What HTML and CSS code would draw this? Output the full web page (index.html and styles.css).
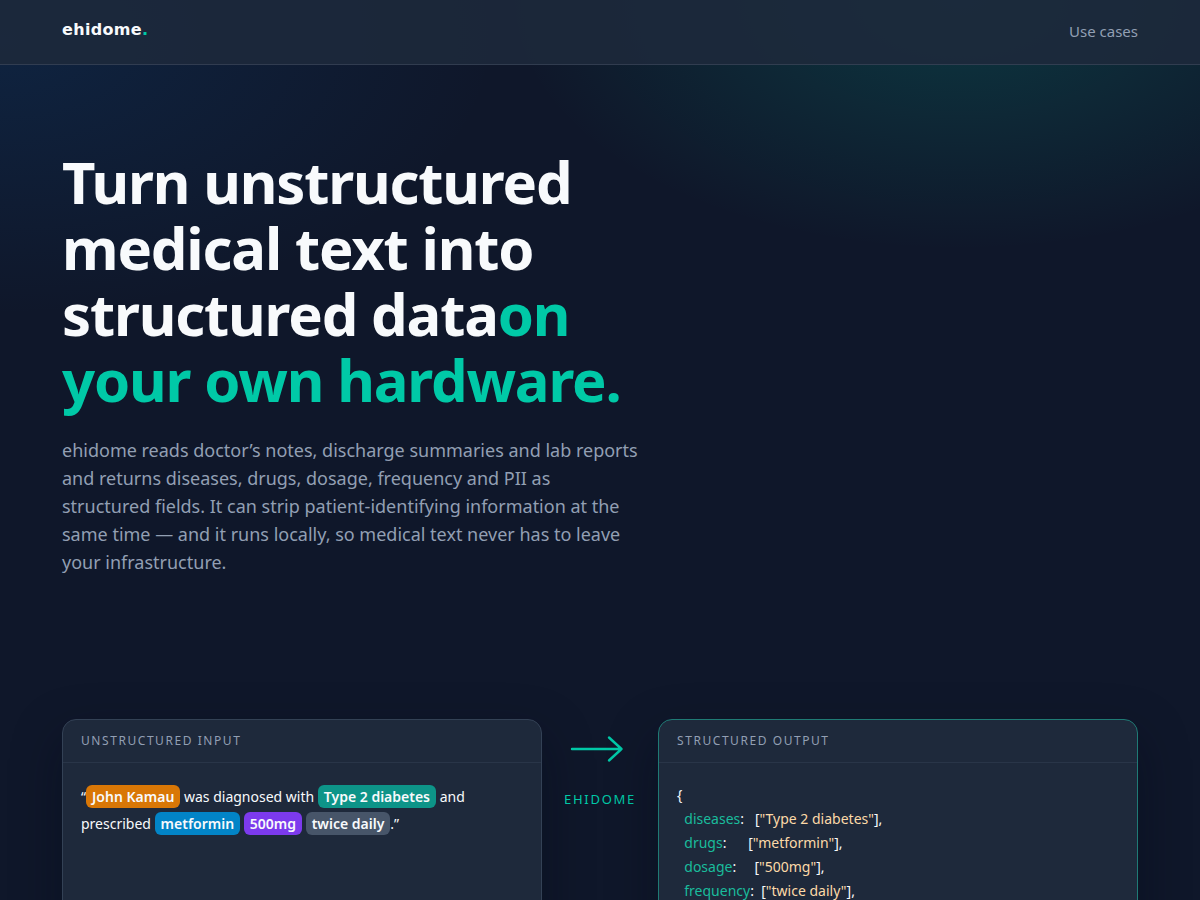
FILE: index.html
```html
<!DOCTYPE html>
<html lang="en">
<head>
	<meta charset="utf-8">
	<meta name="viewport" content="width=device-width, initial-scale=1.0">
	<title>ehidome</title>
	<link rel="stylesheet" href="styles.css">
</head>

<body>
	<header class="nav">
		<div class="container nav-inner">
			<a class="logo" href="#">ehidome<span class="dot">.</span></a>
			<nav>
				<a class="nav-link" href="#use-cases">Use cases</a>
			</nav>
		</div>
	</header>

	<main class="container">
		<section class="hero">
			<h1>Turn unstructured medical text into structured data<span class="accent">on your own hardware.</span></h1>
			<p class="lead">ehidome reads doctor’s notes, discharge summaries and lab reports and returns diseases, drugs, dosage, frequency and PII as structured fields. It can strip patient-identifying information at the same time — and it runs locally, so medical text never has to leave your infrastructure.</p>
		</section>

		<section class="demo" id="use-cases">
			<div class="card">
				<h2 class="card-head">Unstructured input</h2>
				<p class="card-body note">“<mark class="tag name">John Kamau</mark> was diagnosed with <mark class="tag disease">Type 2 diabetes</mark> and prescribed <mark class="tag drug">metformin</mark> <mark class="tag dose">500mg</mark> <mark class="tag freq">twice daily</mark>.”</p>
			</div>

			<div class="flow">
				<svg class="arrow" width="60" height="60" viewBox="0 0 60 60" fill="none" stroke="currentColor" stroke-width="2.4" stroke-linecap="round" stroke-linejoin="round" aria-hidden="true">
					<path d="M2 30h49.500M39 18.500l12.500 11.500l-12.500 11.500"/>
				</svg>
				<span class="flow-label">ehidome</span>
			</div>

			<div class="card output">
				<h2 class="card-head">Structured output</h2>
<pre class="card-body json">{
  <span class="key">diseases</span>:   [<span class="str">"Type 2 diabetes"</span>],
  <span class="key">drugs</span>:      [<span class="str">"metformin"</span>],
  <span class="key">dosage</span>:     [<span class="str">"500mg"</span>],
  <span class="key">frequency</span>:  [<span class="str">"twice daily"</span>],
  <span class="key">pii</span>:        [<span class="str">"John Kamau"</span>]
}</pre>
			</div>
		</section>
	</main>
</body>
</html>
```
FILE: styles.css
```css
* {
	box-sizing: border-box;
}
body {
	margin: 0;
	font-family: "Noto Sans", sans-serif;
	color: #f8fafc;
	background-color: #0f172a;
	background-image:
		radial-gradient(900px 500px at 80% 0, rgba(0, 201, 167, 0.18), transparent 50%),
		radial-gradient(900px 500px at 0 40px, rgba(14, 100, 180, 0.16), transparent 55%);
	background-repeat: no-repeat;
}
a {
	text-decoration: none;
}
.container {
	max-width: 1120px;
	margin: 0 auto;
	padding: 0 22px;
}

/* top bar */
.nav {
	background: rgba(30, 41, 59, 0.88);
	border-bottom: 1px solid rgba(148, 163, 184, 0.18);
}
.nav-inner {
	display: flex;
	align-items: center;
	justify-content: space-between;
	height: 64px;
	padding-bottom: 2px;
}
.logo {
	padding-bottom: 2px;
	font: 700 16px/24px "DejaVu Sans", sans-serif;
	letter-spacing: 0.02em;
	color: #f8fafc;
}
.dot, .accent {
	color: #00c9a7;
}
.nav-link {
	font-size: 15px;
	color: #929fb3;
}

/* hero */
.hero {
	padding: 84px 0 143px;
}
h1 {
	max-width: 600px;
	margin: 0 0 23px;
	font-size: 58px;
	line-height: 66px;
	font-weight: 700;
	letter-spacing: -0.02em;
}
.lead {
	max-width: 577px;
	margin: 0;
	font-size: 18px;
	line-height: 28px;
	color: #929fb3;
}

/* demo */
.demo {
	display: grid;
	grid-template-columns: 1fr 72px 1fr;
	gap: 22px;
	padding-bottom: 80px;
}
.card {
	min-height: 260px;
	background: #1e293b;
	border: 1px solid #334155;
	border-radius: 14px;
	box-shadow: 0 18px 50px rgba(2, 8, 23, 0.35);
}
.output {
	border-color: #1f7a75;
}
.card-head {
	margin: 0;
	padding: 12px 18px;
	border-bottom: 1px solid #293548;
	font-size: 12px;
	line-height: 18px;
	font-weight: 400;
	letter-spacing: 0.13em;
	text-transform: uppercase;
	color: #929fb3;
}
.card-body {
	margin: 0;
	padding: 20px 18px;
	font-family: inherit;
	font-size: 14px;
}
.note {
	line-height: 27px;
}
.tag {
	padding: 2px 6px;
	border-radius: 6px;
	font-weight: 600;
	color: #f8fafc;
}
.name {
	background: #d97706;
}
.disease {
	background: #0d9488;
}
.drug {
	background: #0284c7;
}
.dose {
	background: #7c3aed;
}
.freq {
	background: #475569;
}
.flow {
	display: flex;
	flex-direction: column;
	align-items: center;
	gap: 11px;
	color: #00c9a7;
}
.flow-label {
	font-size: 13px;
	line-height: 18px;
	letter-spacing: 0.13em;
	text-transform: uppercase;
}
.json {
	line-height: 24px;
}
.key {
	color: #1abc9c;
}
.str {
	color: #fcd9a8;
}
```
